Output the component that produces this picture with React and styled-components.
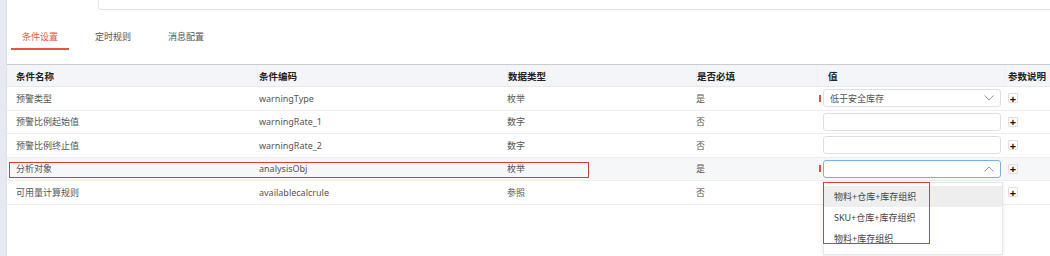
import React from 'react';
import styled, { createGlobalStyle } from 'styled-components';

const GlobalStyle = createGlobalStyle`
  html, body { margin: 0; padding: 0; background: #fff; }
  body {
    font-family: "Noto Sans", "Noto Sans CJK SC", sans-serif;
    font-size: 9px;
    color: #555;
  }
`;

const COLS = '250px 250px 189px 121px 187px 1fr';

const Page = styled.div`
  display: flex;
  width: 1050px;
  height: 256px;
  overflow: hidden;
`;

const SideStrip = styled.div`
  width: 7px;
  flex: none;
  background: #e6eaf0;
  border-right: 1px solid #dce1e8;
  box-sizing: border-box;
`;

const Main = styled.div`
  flex: 1;
  display: flex;
  flex-direction: column;
  background: #fff;
`;

const TopField = styled.div`
  margin-left: 91px;
  height: 10px;
  box-sizing: border-box;
  border: 1px solid #e1e3e6;
  border-top: none;
  border-right: none;
  border-bottom-left-radius: 4px;
`;

const TabBar = styled.div`
  display: flex;
  gap: 15px;
  margin: 16px 0 0 4px;
`;

const Tab = styled.div`
  height: 22px;
  line-height: 22px;
  padding: 0 11px;
  border-bottom: 2px solid ${p => (p.$active ? '#e8533f' : 'transparent')};
  color: ${p => (p.$active ? '#e8533f' : '#555')};
`;

const Table = styled.div`
  margin-top: 14px;
  border-top: 1px solid #c9cdd3;
`;

const HeaderRow = styled.div`
  display: grid;
  grid-template-columns: ${COLS};
  height: 22px;
  background: #f3f5f8;
  border-bottom: 1px solid #e6e9ed;
  box-sizing: border-box;
`;

const HeadCell = styled.div`
  display: flex;
  align-items: center;
  padding-left: ${p => p.$pad}px;
  border-left: ${p => (p.$first ? 'none' : '1px solid #eceff3')};
  font-size: 9.5px;
  font-weight: bold;
  color: #222;
`;

const Row = styled.div`
  position: relative;
  display: grid;
  grid-template-columns: ${COLS};
  height: 23.5px;
  box-sizing: border-box;
  border-bottom: 1px solid #eceef1;
  background: ${p => (p.$hover ? '#f6f7f9' : '#fff')};
`;

const Cell = styled.div`
  position: relative;
  display: flex;
  align-items: center;
  padding-left: ${p => p.$pad}px;
  white-space: nowrap;
`;

const Marker = styled.span`
  width: 2px;
  height: 7px;
  margin-right: 2px;
  background: ${p => (p.$show ? '#e34d3d' : 'transparent')};
`;

const InputBox = styled.div`
  width: 178px;
  height: 18px;
  box-sizing: border-box;
  border: 1px solid ${p => (p.$focus ? '#79aee6' : '#dcdfe4')};
  border-radius: 3px;
  background: #fff;
  display: flex;
  align-items: center;
  justify-content: space-between;
  padding: 0 6px 0 6px;
  color: #555;
`;

const Chevron = styled.svg`
  width: 10px;
  height: 6px;
  flex: none;
`;

const PlusBtn = styled.div`
  width: 10px;
  height: 10px;
  box-sizing: border-box;
  border: 1px solid #dedede;
  border-radius: 1px;
  display: flex;
  align-items: center;
  justify-content: center;
  font-size: 11px;
  font-weight: bold;
  line-height: 1;
  color: #111;
`;

const Highlight = styled.div`
  position: absolute;
  left: ${p => p.$left}px;
  top: ${p => p.$top}px;
  width: ${p => p.$w}px;
  height: ${p => p.$h}px;
  box-sizing: border-box;
  border: 1.5px solid #e2383c;
  pointer-events: none;
  z-index: 3;
`;

const Dropdown = styled.div`
  position: absolute;
  left: 6px;
  top: calc(100% + 2px);
  width: 180px;
  height: 73px;
  box-sizing: border-box;
  background: #fff;
  border: 1px solid #e6e6e6;
  box-shadow: 0 2px 6px rgba(0, 0, 0, 0.08);
  padding-top: 3px;
  z-index: 2;
`;

const Option = styled.div`
  height: 21px;
  line-height: 21px;
  padding-left: 10px;
  color: #444;
  background: ${p => (p.$active ? '#eeeeee' : 'transparent')};
`;

const ChevronDown = () => (
  <Chevron viewBox="0 0 10 6">
    <polyline points="0.5,0.5 5,5 9.5,0.5" fill="none" stroke="#9a9a9a" strokeWidth="1" />
  </Chevron>
);

const ChevronUp = () => (
  <Chevron viewBox="0 0 10 6">
    <polyline points="0.5,5.5 5,1 9.5,5.5" fill="none" stroke="#9a9a9a" strokeWidth="1" />
  </Chevron>
);

const rows = [
  { name: '预警类型', code: 'warningType', type: '枚举', req: '是', value: '低于安全库存', select: 'down' },
  { name: '预警比例起始值', code: 'warningRate_1', type: '数字', req: '否', value: '' },
  { name: '预警比例终止值', code: 'warningRate_2', type: '数字', req: '否', value: '' },
  { name: '分析对象', code: 'analysisObj', type: '枚举', req: '是', value: '', select: 'up', open: true },
  { name: '可用量计算规则', code: 'availablecalcrule', type: '参照', req: '否', none: true },
];

const options = ['物料+仓库+库存组织', 'SKU+仓库+库存组织', '物料+库存组织'];

export default function App() {
  return (
    <>
      <GlobalStyle />
      <Page>
        <SideStrip />
        <Main>
          <TopField />
          <TabBar>
            <Tab $active>条件设置</Tab>
            <Tab>定时规则</Tab>
            <Tab>消息配置</Tab>
          </TabBar>
          <Table>
            <HeaderRow>
              <HeadCell $first $pad={9}>条件名称</HeadCell>
              <HeadCell $pad={1}>条件编码</HeadCell>
              <HeadCell $pad={0}>数据类型</HeadCell>
              <HeadCell $pad={0}>是否必填</HeadCell>
              <HeadCell $pad={10}>值</HeadCell>
              <HeadCell $pad={3}>参数说明</HeadCell>
            </HeaderRow>
            {rows.map(r => (
              <Row key={r.code} $hover={r.open}>
                {r.open && <Highlight $left={2} $top={4} $w={580} $h={16} />}
                <Cell $pad={9}>{r.name}</Cell>
                <Cell $pad={2}>{r.code}</Cell>
                <Cell $pad={0}>{r.type}</Cell>
                <Cell $pad={0}>{r.req}</Cell>
                <Cell $pad={2}>
                  {!r.none && (
                    <>
                      <Marker $show={r.req === '是'} />
                      <InputBox $focus={r.open}>
                        <span>{r.value}</span>
                        {r.select === 'down' && <ChevronDown />}
                        {r.select === 'up' && <ChevronUp />}
                      </InputBox>
                    </>
                  )}
                  {r.open && (
                    <Dropdown>
                      <Highlight $left={-1} $top={-1} $w={107} $h={62} />
                      {options.map((o, i) => (
                        <Option key={o} $active={i === 0}>{o}</Option>
                      ))}
                    </Dropdown>
                  )}
                </Cell>
                <Cell $pad={4}>
                  <PlusBtn>+</PlusBtn>
                </Cell>
              </Row>
            ))}
          </Table>
        </Main>
      </Page>
    </>
  );
}
